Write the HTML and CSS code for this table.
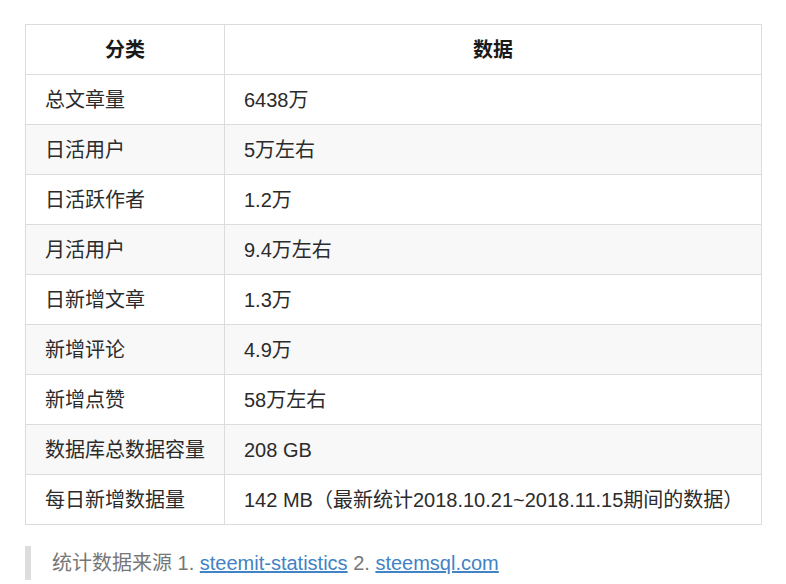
FILE: index.html
```html
<!DOCTYPE html>
<html lang="zh-CN">
<head>
<meta charset="utf-8">
<link rel="stylesheet" href="styles.css">
</head>
<body>
<div class="page">
  <table class="stats">
    <thead>
      <tr><th class="c1">分类</th><th>数据</th></tr>
    </thead>
    <tbody>
      <tr><td>总文章量</td><td>6438万</td></tr>
      <tr><td>日活用户</td><td>5万左右</td></tr>
      <tr><td>日活跃作者</td><td>1.2万</td></tr>
      <tr><td>月活用户</td><td>9.4万左右</td></tr>
      <tr><td>日新增文章</td><td>1.3万</td></tr>
      <tr><td>新增评论</td><td>4.9万</td></tr>
      <tr><td>新增点赞</td><td>58万左右</td></tr>
      <tr><td>数据库总数据容量</td><td>208 GB</td></tr>
      <tr><td>每日新增数据量</td><td>142 MB（最新统计2018.10.21~2018.11.15期间的数据）</td></tr>
    </tbody>
  </table>
  <blockquote class="note">统计数据来源 1. <a href="#">steemit-statistics</a> 2. <a href="#">steemsql.com</a></blockquote>
</div>
</body>
</html>
```
FILE: styles.css
```css
html, body {
  margin: 0;
  padding: 0;
  background: #fff;
}
body {
  font-family: "Liberation Sans", "Noto Sans CJK SC", sans-serif;
  color: #2b2b2b;
}
.page {
  padding: 24px 24px 0 25px;
}
.stats {
  border-collapse: collapse;
  width: 737px;
  font-size: 20px;
}
.stats th, .stats td {
  border: 1px solid #dcdcdc;
  height: 49px;
  padding: 0 19px;
  text-align: left;
  vertical-align: middle;
  line-height: 24px;
}
.stats th {
  text-align: center;
  font-weight: bold;
  color: #1a1a1a;
}
.stats th.c1 {
  width: 160px;
}
.stats tbody tr:nth-child(even) td {
  background: #f8f8f8;
}
.note {
  margin: 21px 0 0 0;
  padding: 6px 0 6px 21px;
  border-left: 6px solid #dddddd;
  color: #777;
  font-size: 20px;
  line-height: 22px;
}
.note a {
  color: #4183c4;
  text-decoration: underline;
}
```
